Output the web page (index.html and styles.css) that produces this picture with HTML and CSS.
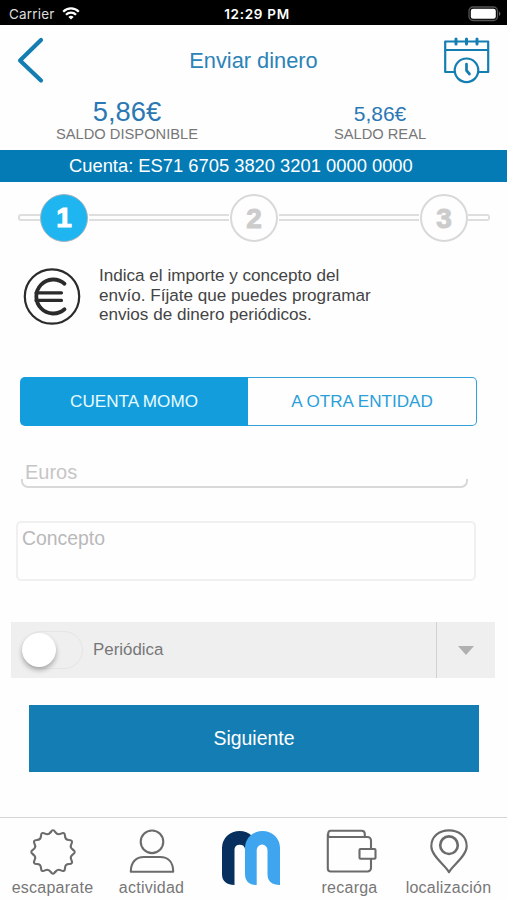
FILE: index.html
```html
<!DOCTYPE html>
<html lang="es">
    <head>
        <meta charset="utf-8">
        <title>Enviar dinero</title>
        <link rel="stylesheet" href="styles.css">
    </head>
    <body>
        <div class="status-bar">
            <div class="carrier">
                <span>Carrier</span>
                <svg width="18" height="13" viewBox="0 0 18 13" fill="none" stroke="#fff" stroke-width="2.3">
                    <path d="M1.2 4.7a11 11 0 0 1 15.6 0"/>
                    <path d="M4 7.8a7 7 0 0 1 10 0"/>
                    <path d="M9 12.6L6.4 10a3.7 3.7 0 0 1 5.2 0z" fill="#fff" stroke="none"/>
                </svg>
            </div>
            <span class="clock">12:29 PM</span>
            <svg class="battery" width="33" height="16" viewBox="0 0 33 16">
                <rect x="1" y="1" width="28.5" height="13.5" rx="4" fill="none" stroke="#555" stroke-width="1.3"/>
                <rect x="2.8" y="2.8" width="25" height="10" rx="2.2" fill="#fff"/>
                <path d="M31 5.5a2.6 2.6 0 0 1 0 4.6z" fill="#666"/>
            </svg>
        </div>

        <header class="header">
            <svg width="30" height="50" viewBox="0 0 30 50" fill="none" stroke="#147eb3" stroke-width="4.2" stroke-linecap="round" stroke-linejoin="round">
                <path d="M25 5L4 25.4L25 45.5"/>
            </svg>
            <h1 class="title">Enviar dinero</h1>
            <svg width="48" height="48" viewBox="0 0 48 48" fill="none" stroke="#147eb3" stroke-width="2.2" stroke-linecap="round" stroke-linejoin="round">
                <path d="M12 35H2.2V4.5H45.2V35H35M2.2 13H45.2"/>
                <path d="M13 2v5M23.5 2v5M34 2v5" stroke-width="3"/>
                <circle cx="23.5" cy="33.3" r="11.8"/>
                <path d="M23.5 27v6.5l3 3.5" stroke-width="2.7"/>
            </svg>
        </header>

        <div class="balances">
            <div class="balance available">
                <span class="amount">5,86€</span>
                <span class="label">SALDO DISPONIBLE</span>
            </div>
            <div class="balance real">
                <span class="amount">5,86€</span>
                <span class="label">SALDO REAL</span>
            </div>
        </div>
        <div class="account">Cuenta: ES71 6705 3820 3201 0000 0000</div>

        <div class="steps">
            <div class="line line-start"></div>
            <div class="step active">1</div>
            <div class="line"></div>
            <div class="step">2</div>
            <div class="line"></div>
            <div class="step">3</div>
            <div class="line line-end"></div>
        </div>

        <div class="info">
            <svg width="58" height="58" viewBox="0 0 58 58" fill="none" stroke="#2b2b2b">
                <circle cx="29" cy="28.5" r="27.2" stroke-width="2.2"/>
                <path d="M41.5 15.7A17 17 0 1 0 41.5 41.3" stroke-width="3.8" stroke-linecap="round"/>
                <path d="M13 24.8H38.5M13 32.4H38.5" stroke-width="3.2" stroke-linecap="round"/>
            </svg>
            <p class="info-text">Indica el importe y concepto del<br>envío. Fíjate que puedes programar<br>envios de dinero periódicos.</p>
        </div>

        <div class="tabs">
            <button class="tab tab-selected">CUENTA MOMO</button>
            <button class="tab">A OTRA ENTIDAD</button>
        </div>

        <div class="euros-wrap">
            <input type="text" class="euros" placeholder="Euros">
        </div>
        <textarea class="concepto" placeholder="Concepto"></textarea>

        <div class="periodic">
            <div class="switch"><div class="knob"></div></div>
            <span class="periodic-label">Periódica</span>
            <div class="dropdown"><div class="arrow"></div></div>
        </div>

        <button class="next">Siguiente</button>

        <nav class="nav">
            <div class="nav-item">
                <svg width="48" height="48" viewBox="-24 -24 48 48" fill="none" stroke="#6b6b6b" stroke-width="2.1" stroke-linecap="round">
                    <path id="wave" d="M-2.3 -19.9Q0 -23.5 2.3 -19.9Q4.5 -16.6 8 -18.4Q11.8 -20.4 12 -16.1Q12.1 -12.1 16.1 -12Q20.4 -11.8 18.4 -8Q16.6 -4.5 19.9 -2.3"/>
                    <use href="#wave" transform="rotate(90)"/>
                    <use href="#wave" transform="rotate(180)"/>
                    <use href="#wave" transform="rotate(270)"/>
                </svg>
                <span>escaparate</span>
            </div>
            <div class="nav-item">
                <svg width="48" height="48" viewBox="0 0 48 48" fill="none" stroke="#6b6b6b" stroke-width="2.1" stroke-linejoin="round">
                    <circle cx="24" cy="13.8" r="11.3"/>
                    <path d="M2.8 43.8H45.2C45.2 34 40 29 32 29H16C8 29 2.8 34 2.8 43.8z"/>
                </svg>
                <span>actividad</span>
            </div>
            <div class="nav-item home">
                <svg width="60" height="56" viewBox="0 0 60 56">
                    <path d="M1 17.5A17.5 16.5 0 0 1 18.5 1Q26 1 31 6V24H24.5V19H24a5.3 5 0 0 0 -10.5 0V55C6 55 1 51.5 1 44z" fill="#07305f"/>
                    <path d="M24 17.5a17.5 16.5 0 0 1 35 0V55C51 55 46.5 51.5 46.5 44V20a5.4 5.4 0 0 0 -10.8 0V55C28.5 55 24 51.5 24 44z" fill="#3fa5ef"/>
                </svg>
            </div>
            <div class="nav-item recarga">
                <svg width="52" height="48" viewBox="0 0 52 48" fill="none" stroke="#6b6b6b" stroke-width="2.1" stroke-linejoin="round">
                    <path d="M46 21V12.5a3.5 3.5 0 0 0 -3.5 -3.5H4.5C2.5 9 2.5 2.8 5.5 2.8H36.5Q39.8 2.8 39.8 6V9M2.8 6V40.5a3 3 0 0 0 3 3H42.5a3.5 3.5 0 0 0 3.5 -3.5V31"/>
                    <rect x="34.5" y="21" width="16" height="9.8" rx="1"/>
                </svg>
                <span>recarga</span>
            </div>
            <div class="nav-item">
                <svg width="48" height="48" viewBox="0 0 48 48" fill="none" stroke="#6b6b6b" stroke-width="2.1" stroke-linejoin="round">
                    <path d="M24 44.2C21 38 6.3 28 6.3 18.2C6.3 8.5 14 2.4 24 2.4S41.7 8.5 41.7 18.2C41.7 28 27 38 24 44.2z"/>
                    <circle cx="24" cy="17.2" r="8.8" stroke-width="2.6"/>
                </svg>
                <span>localización</span>
            </div>
        </nav>
    </body>
</html>
```
FILE: styles.css
```css
*{
    box-sizing: border-box;
}
body{
    margin: 0;
    width: 507px;
    height: 900px;
    display: flex;
    flex-direction: column;
    background-color: #fefefe;
    font-family: "Liberation Sans", Arial, sans-serif;
    overflow: hidden;
}
svg{
    display: block;
    flex: none;
}
button{
    font-family: inherit;
    cursor: pointer;
}

.status-bar{
    height: 25px;
    flex: none;
    background-color: #000;
    color: #fff;
    display: grid;
    grid-template-columns: 1fr auto 1fr;
    align-items: center;
    padding: 2px 6px 0 9px;
    font-family: Inter, sans-serif;
    font-size: 13.5px;
}
.carrier{
    display: flex;
    align-items: center;
    gap: 7px;
    color: #ddd;
    letter-spacing: 0.2px;
}
.clock{
    font-weight: 600;
    font-size: 13.5px;
    letter-spacing: 0.7px;
    padding-left: 4px;
}
.battery{
    justify-self: end;
}

.header{
    height: 72px;
    flex: none;
    display: flex;
    justify-content: space-between;
    align-items: flex-start;
    padding: 10px 16px 0 16px;
}
.title{
    margin: 13px 0 0 18px;
    font-size: 21.8px;
    line-height: 26px;
    font-weight: normal;
    color: #2b83b8;
}
.header svg:last-child{
    margin-top: 2px;
}

.balances{
    display: flex;
    height: 53px;
    flex: none;
}
.balance{
    display: flex;
    flex-direction: column;
    align-items: center;
    justify-content: flex-end;
    width: 254px;
    padding-bottom: 7px;
}
.real{
    width: 252px;
}
.amount{
    color: #2b78b4;
    font-size: 27.3px;
    line-height: 28px;
}
.real .amount{
    font-size: 21px;
    line-height: 25px;
}
.label{
    color: #777;
    font-size: 14.7px;
    line-height: 17px;
}
.account{
    height: 32px;
    flex: none;
    background-color: #047bb5;
    color: #fff;
    font-size: 18.35px;
    line-height: 32px;
    padding-left: 69px;
}

.steps{
    display: flex;
    align-items: center;
    height: 48px;
    margin: 12px 17px 0 18px;
    flex: none;
}
.step{
    width: 48px;
    height: 48px;
    flex: none;
    border: 2px solid #d9d9d9;
    border-radius: 50%;
    color: #ccc;
    font-size: 28px;
    line-height: 45px;
    font-weight: bold;
    text-align: center;
    -webkit-text-stroke: 1px;
}
.active{
    background-color: #1fb5f1;
    border: 1px solid #a5b5bd;
    line-height: 46px;
    color: #fff;
}
.line{
    flex: 1;
    height: 7px;
    margin: 0 1px;
    margin-top: -2px;
    border: solid #dedede;
    border-width: 2px 0;
}
.line-start{
    flex: none;
    width: 22px;
    margin: -2px 0 0;
    border-left-width: 2px;
    border-radius: 3px 0 0 3px;
}
.line-end{
    flex: none;
    width: 22px;
    margin: -2px 0 0;
    border-right-width: 2px;
    border-radius: 0 3px 3px 0;
}

.info{
    display: flex;
    gap: 18px;
    height: 62px;
    margin: 24px 0 0 23px;
    flex: none;
}
.info svg{
    margin-top: 2px;
}
.info-text{
    margin: 0;
    font-size: 17.1px;
    line-height: 19.6px;
    color: #444;
}

.tabs{
    display: flex;
    width: 457px;
    height: 49px;
    margin: 49px 0 0 20px;
    flex: none;
}
.tab{
    flex: 1;
    border: 1px solid #2fa0d9;
    border-left: none;
    border-radius: 0 5px 5px 0;
    background-color: #fefefe;
    color: #2a9fd8;
    font-size: 17.1px;
    padding: 0;
}
.tab-selected{
    border: none;
    border-radius: 5px 0 0 5px;
    background-color: #139ddd;
    color: #e8fbff;
}

.euros-wrap{
    height: 30px;
    margin: 32px 39px 0 21px;
    overflow: hidden;
    display: flex;
    align-items: flex-end;
    position: relative;
    flex: none;
}
.euros{
    width: 100%;
    height: 30px;
    border: none;
    padding: 0 0 2px 4px;
    background: none;
    font-family: inherit;
    font-size: 20px;
}
/* only the bottom corners of the field outline show */
.euros-wrap::after{
    content: "";
    position: absolute;
    left: 0;
    right: 0;
    bottom: 0;
    height: 7px;
    border: 2px solid #d8d8d8;
    border-top: none;
    border-radius: 0 0 7px 7px;
}
.euros::placeholder{
    color: #c6c6c6;
}
.concepto{
    width: 460px;
    height: 60px;
    margin: 33px 0 0 16px;
    border: 2px solid #f0f0f0;
    border-radius: 5px;
    padding: 4px;
    background: none;
    font-family: inherit;
    font-size: 19.4px;
    line-height: 23px;
    resize: none;
    flex: none;
}
.concepto::placeholder{
    color: #b9b9b9;
}

.periodic{
    display: flex;
    align-items: center;
    height: 56px;
    margin: 41px 12px 0 11px;
    background-color: #efefef;
    flex: none;
}
.switch{
    width: 61px;
    height: 38px;
    margin-left: 11px;
    border: 1.5px solid #e5e5e5;
    border-radius: 19px;
}
.knob{
    width: 34px;
    height: 34px;
    margin: 1px 0 0 -1px;
    border-radius: 50%;
    background-color: #fff;
    box-shadow: 0 3px 5px rgba(0,0,0,0.3);
}
.periodic-label{
    margin-left: 10px;
    font-size: 16.9px;
    color: #777;
}
.dropdown{
    width: 59px;
    height: 56px;
    margin-left: auto;
    border-left: 1px solid #d2d2d2;
    display: flex;
    align-items: center;
    justify-content: center;
}
.arrow{
    border: 8px solid transparent;
    border-top: 9px solid #b0b0b0;
    border-bottom: none;
}

.next{
    height: 67px;
    margin: 27px 28px 0 29px;
    border: none;
    background-color: #147eb4;
    color: #fff;
    font-size: 19.4px;
    flex: none;
}

.nav{
    display: grid;
    grid-template-columns: repeat(5, 99px);
    height: 83px;
    margin-top: auto;
    border-top: 1.5px solid #d5d5d5;
    padding: 10px 0 0 3px;
    flex: none;
}
.nav-item{
    display: flex;
    flex-direction: column;
    align-items: center;
    color: #777;
    font-size: 16px;
    line-height: 20px;
    letter-spacing: 0.25px;
}
.nav-item span{
    margin-top: 2px;
}
.home svg{
    margin-top: 2px;
}
.recarga svg{
    margin-left: 2px;
}
```
